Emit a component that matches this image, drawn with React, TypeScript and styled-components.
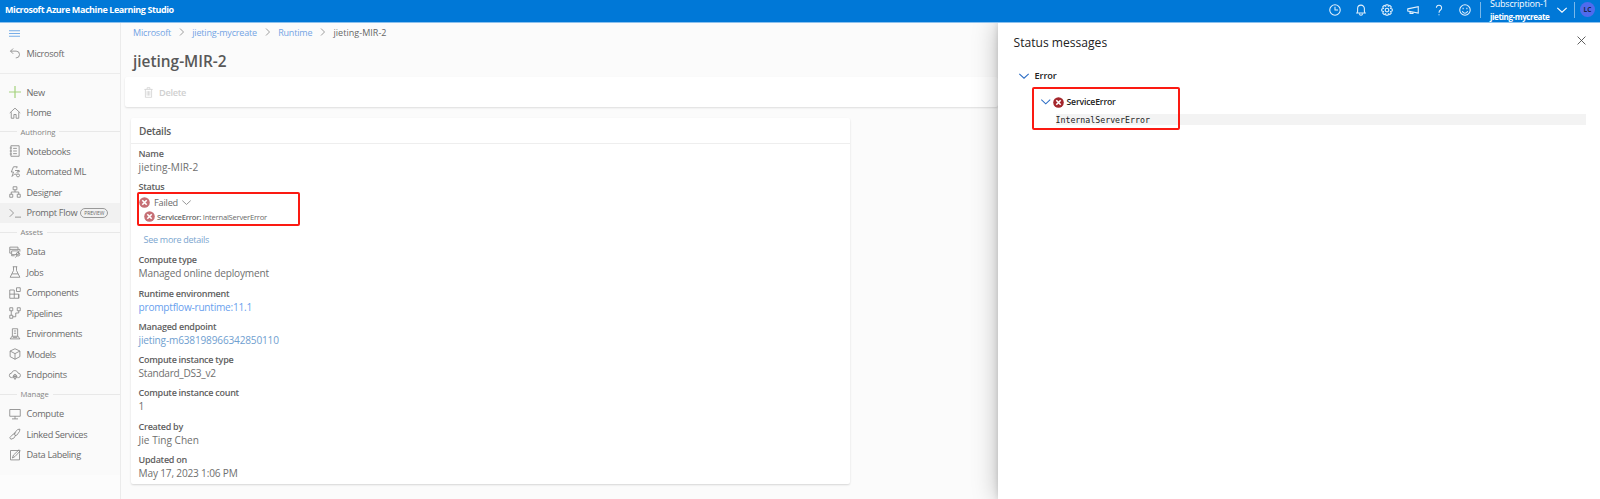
import React from "react";
import styled, { createGlobalStyle } from "styled-components";

const Global = createGlobalStyle`
  * { box-sizing: border-box; }
  html, body { margin: 0; padding: 0; overflow: hidden; }
  body { background: #fafafa; font-family: "Open Sans", "Noto Sans", sans-serif; color: #6a6a6a; }
`;

const Page = styled.div`
  width: 1600px;
  height: 499px;
  display: flex;
  flex-direction: column;
  overflow: hidden;
`;

const Header = styled.header`
  height: 23px;
  flex: none;
  background: #0078d7;
  border-bottom: 1px solid #8cc1ee;
  display: flex;
  align-items: center;
  color: #fff;
`;

const Brand = styled.div`
  margin: -3px auto 0 5px;
  font-size: 9px;
  font-weight: 700;
  line-height: 14px;
  letter-spacing: -0.42px;
  white-space: nowrap;
`;

const HeaderIcons = styled.div`
  display: flex;
  align-items: center;
  gap: 14px;
  margin: -3px 9px 0 0;
`;

const Divider = styled.span`
  width: 1px;
  height: 16px;
  margin-top: -3px;
  background: #7ab8ea;
`;

const Subscription = styled.div`
  width: 67px;
  margin: -1px 0 0 9px;
  font-size: 9px;
  line-height: 12px;
  letter-spacing: -0.2px;
  white-space: nowrap;
  strong { display: block; font-size: 8px; line-height: 13px; letter-spacing: -0.4px; }
`;

const HeaderChevron = styled.span`
  display: flex;
  margin: -3px 7px 0 0;
`;

const Avatar = styled.span`
  width: 15px;
  height: 15px;
  border-radius: 50%;
  margin: -3px 5px 0 5px;
  background: #4f6bed;
  color: #17264f;
  font-size: 6.5px;
  font-weight: 700;
  line-height: 15px;
  text-align: center;
`;

const Body = styled.div`
  flex: 1;
  min-height: 0;
  display: flex;
`;

const Sidebar = styled.nav`
  width: 121px;
  flex: none;
  border-right: 1px solid #ebebeb;
  background: linear-gradient(#fafafa 452px, #fcfcfc 452px);
`;

const MenuToggle = styled.div`
  height: 20px;
  display: flex;
  align-items: center;
  padding-left: 9px;
`;

const NavItem = styled.div<{ $active?: boolean }>`
  height: 20.5px;
  display: flex;
  align-items: center;
  gap: 5.5px;
  padding-left: 9px;
  font-size: 9.2px;
  letter-spacing: -0.32px;
  white-space: nowrap;
  background: ${(p) => (p.$active ? "#f1f1f1" : "transparent")};
`;

const BackArea = styled.div`
  height: 31px;
  border-bottom: 1px solid #ececec;
  margin-bottom: 7.8px;
`;

const NavSection = styled.div`
  height: 18.4px;
  display: flex;
  align-items: center;
  gap: 4px;
  font-size: 7.7px;
  letter-spacing: -0.08px;
  color: #858585;
  &::before { content: ""; width: 16.5px; height: 1px; background: #e8e8e8; }
  &::after { content: ""; flex: 1; height: 1px; background: #e8e8e8; }
`;

const PreviewTag = styled.span`
  height: 10px;
  margin-left: -2.5px;
  padding: 0 3px;
  border: 1px solid #999;
  border-radius: 6px;
  font-size: 5px;
  line-height: 8px;
  letter-spacing: -0.1px;
`;

const Main = styled.main`
  flex: 1;
  min-width: 0;
  padding-left: 4px;
  background: #fbfbfb;
`;

const Breadcrumb = styled.div`
  height: 18px;
  display: flex;
  align-items: center;
  gap: 6.6px;
  padding-left: 8px;
  font-size: 9px;
  letter-spacing: -0.18px;
  color: #74a4e4;
  white-space: nowrap;
`;

const Current = styled.span`
  color: #666;
  letter-spacing: 0.03px;
`;

const Title = styled.h1`
  margin: 10px 0 4px 8px;
  font-size: 15.4px;
  font-weight: 600;
  line-height: 22px;
  color: #585858;
`;

const Toolbar = styled.div`
  height: 30px;
  display: flex;
  align-items: center;
  gap: 5px;
  padding-left: 18px;
  background: #fff;
  border-radius: 2px;
  box-shadow: 0 1px 2px #0000001f;
  font-size: 9.2px;
  font-weight: 600;
  letter-spacing: -0.3px;
  color: #d0d0d0;
`;

const Card = styled.section`
  width: 719px;
  height: 366px;
  margin: 11px 0 0 6px;
  background: #fff;
  border-radius: 2px;
  box-shadow: 0 1px 2px #00000026;
`;

const CardTitle = styled.h2`
  height: 26px;
  margin: 0;
  padding-left: 8px;
  border-bottom: 1px solid #eee;
  font-size: 10.1px;
  font-weight: 600;
  line-height: 26px;
  letter-spacing: -0.25px;
  color: #5c5c5c;
`;

const Field = styled.div`
  height: 33.3px;
  padding: 3px 0 0 7.6px;
  white-space: nowrap;
`;

const Label = styled.div`
  font-size: 9px;
  font-weight: 600;
  line-height: 13px;
  letter-spacing: -0.27px;
  color: #606060;
`;

const Value = styled.div<{ $color?: string; $spacing?: number }>`
  font-size: 10.1px;
  line-height: 14px;
  letter-spacing: ${(p) => p.$spacing ?? -0.18}px;
  color: ${(p) => p.$color ?? "#6f6f6f"};
`;

const StatusField = styled(Field)`
  height: 73px;
`;

const StatusBox = styled.div`
  width: 163px;
  height: 34px;
  margin: -1px 0 0 -2px;
  border: 2px solid #fb1a12;
  border-radius: 2px;
`;

const StatusRow = styled.div<{ $indent?: boolean }>`
  height: ${(p) => (p.$indent ? 13 : 16)}px;
  display: flex;
  align-items: center;
  gap: ${(p) => (p.$indent ? 2.5 : 4.5)}px;
  padding-left: ${(p) => (p.$indent ? 5 : 0)}px;
  font-size: ${(p) => (p.$indent ? "7.6px" : "9.2px")};
  letter-spacing: -0.23px;
  b { font-weight: 600; }
`;

const MoreLink = styled.div`
  margin: 7px 0 0 5px;
  font-size: 9px;
  line-height: 13px;
  letter-spacing: -0.28px;
  color: #7ba6cf;
`;

const Panel = styled.aside`
  width: 602px;
  flex: none;
  z-index: 1;
  background: #fff;
  box-shadow: 0 0 24px #00000045, 0 0 6px #00000022;
  clip-path: inset(0 0 0 -60px);
  color: #222;
`;

const PanelHeader = styled.div`
  height: 42px;
  display: flex;
  align-items: center;
  justify-content: space-between;
  padding: 0 14px 4px 15.5px;
  font-size: 12.1px;
`;

const PanelClose = styled.span`
  display: flex;
  margin-top: -3px;
`;

const TreeRow = styled.div`
  display: flex;
  align-items: center;
  gap: 5.5px;
  height: 22px;
  padding: 0 0 1px 21px;
  font-size: 9.2px;
  font-weight: 600;
  letter-spacing: -0.1px;
`;

const ErrorGroup = styled.div`
  display: flex;
  margin: -0.5px 0 0 34px;
`;

const ErrorBox = styled.div`
  width: 147.5px;
  height: 43px;
  flex: none;
  border: 2px solid #fb1a12;
  border-radius: 2px;
`;

const ErrorRow = styled.div`
  height: 25px;
  display: flex;
  align-items: center;
  gap: 2.5px;
  padding: 2px 0 0 7px;
  font-size: 8.7px;
  font-weight: 600;
  letter-spacing: -0.18px;
`;

const Message = styled.div`
  height: 11px;
  margin-left: 21.5px;
  background: #f3f3f3;
  font-family: "DejaVu Sans Mono", monospace;
  font-size: 8.25px;
  line-height: 12px;
`;

const MessageTail = styled.div`
  width: 406px;
  height: 11px;
  margin-top: 27px;
  background: #f3f3f3;
`;

type IconProps = { d: string; size?: number; color?: string; w?: number };
const Icon = ({ d, size = 12, color = "#858585", w = 1.1 }: IconProps) => (
  <svg width={size} height={size} viewBox="0 0 16 16" fill="none" stroke={color} strokeWidth={w} overflow="visible" style={{ flex: "none" }}>
    <path d={d} />
  </svg>
);

const ErrorIcon = ({ color }: { color: string }) => (
  <svg width="11" height="11" viewBox="0 0 11 11" style={{ flex: "none" }}>
    <circle cx="5.5" cy="5.5" r="5.3" fill={color} />
    <path d="M3.3 3.3l4.4 4.4M7.7 3.3L3.3 7.7" stroke="#fff" strokeWidth="1.6" />
  </svg>
);

const circle = (x: number, y: number, r: number) => `M${x - r} ${y}a${r} ${r} 0 1 0 ${2 * r} 0a${r} ${r} 0 1 0 ${-2 * r} 0`;
const chevronDown = "M0.500 4.500l7.500 7 7.500-7";
const chevronRight = "M4 1l7 7-7 7";

const icons = {
  menu: "M0 4h16M0 8h16M0 12h16",
  back: "M5.500 2L2 5.500 5.500 9M2 5.500h7.500a4.500 4.500 0 0 1 0 9H9",
  plus: "M8 0v16M0 8h16",
  home: "M1 8l7-6.500L15 8M3 7v8h3.500v-5h3v5H13V7",
  notebook: "M2.500 1h11v14h-11zM5.500 4.500h5M5.500 8h5M5.500 11.500h5M1 4h3M1 8h3M1 12h3",
  automl: "M10 3l1-2H6L3 8h3l-2 6 3-3M8 6h5l-3 3.500M7 11h3" + circle(12, 12.5, 2) + circle(13, 7, 1),
  designer: "M5.500 1h5v4h-5zM8 5v3M3 11V8h10v3M1 11h4v4H1zM11 11h4v4h-4z",
  prompt: "M1 3l5 5-5 5M8 13.500h8",
  data: "M1 1.500h11v3H1zM1 4.500v5h2M12 4.500h2.500v3M3.500 6.500h9v5h-9zM3.500 11.500v1.500h4" + circle(12, 11, 2.4) + "M10.500 13L8.500 15.500",
  flask: "M5 1h6M6 1v5L1.500 15h13L10 6V1M4 10.500h8",
  components: "M1 4h6v11H1zM1 9.500h12V15H7M13 9.500V15M10 1h5v5h-5z",
  pipelines: "M1 1h4v4H1zM11 1h4v4h-4zM3 5v6M1 11h4v4H1zM13 5v3H9v5M5 13h4",
  environments: "M4.500 1h7v10h-7zM1.500 14.500L4.500 10.500M11.500 10.500l3 4M1.500 14.500h13M6.500 4h3M6.500 7h3M5 12.500h6",
  cube: "M8 1l6.500 3v7.500L8 15l-6.500-3.500V4zM1.500 4L8 7.500 14.500 4M8 7.500V15",
  cloud: "M5 11.500H3.500a3 3 0 0 1 0-6C4.500 1 11 1 12 5.500a3 3 0 0 1 .5 6H11M8 6.500v8" + circle(8, 10, 2.5) + "M5.500 10h5",
  monitor: "M1 2h14v9H1zM8 11v3.500M4 14.500h8",
  link: "M7 7l4.500-5 3-.5-.5 3-3.500 5-2.500.5zM9.500 6L4 9.500l-3 3.500 1.500 2 4-1.500 2.500-4",
  label: "M14 6v8.500H2V2h12v4M4.500 12l1.500-4L13.500 1 15 2.500 8 10z",
  trash: "M2 3.500h12M6 3V1h4v2M3.500 3.500V15h9V3.500M6 6v6.500M8 6v6.500M10 6v6.500",
  clock: circle(8, 8, 7) + "M8 3.500V8h4",
  bell: "M2.500 12h11l-1-2V6a4.500 4.500 0 0 0-9 0v4zM6 13a2 2 0 0 0 4 0",
  gear: "M6.700 1h2.600l.5 2 2-1 1.900 1.900-1 2 2.300.8v2.600l-2.300.8 1 2-1.900 1.900-2-1-.5 2H6.700l-.5-2-2 1-1.900-1.900 1-2L1 9.300V6.700l2.300-.8-1-2L4.200 2l2 1z" + circle(8, 8, 2.4),
  megaphone: "M1 6.500L15 3.500v8.500L1 9.500zM4 10v2.500h4V11",
  help: "M4.500 5a3.500 3.500 0 1 1 5.500 3C8.500 9 8 9.500 8 11.500M8 13.500v1.500",
  smile: circle(8, 8, 7) + "M4.500 9.500a3.600 3.600 0 0 0 7 0M5.500 5v2M10.500 5v2",
  close: "M1 1l14 14M15 1l-14 14",
};

const groups: { section?: string; items: [string, string][] }[] = [
  { items: [["New", icons.plus], ["Home", icons.home]] },
  {
    section: "Authoring",
    items: [
      ["Notebooks", icons.notebook],
      ["Automated ML", icons.automl],
      ["Designer", icons.designer],
      ["Prompt Flow", icons.prompt],
    ],
  },
  {
    section: "Assets",
    items: [
      ["Data", icons.data],
      ["Jobs", icons.flask],
      ["Components", icons.components],
      ["Pipelines", icons.pipelines],
      ["Environments", icons.environments],
      ["Models", icons.cube],
      ["Endpoints", icons.cloud],
    ],
  },
  {
    section: "Manage",
    items: [
      ["Compute", icons.monitor],
      ["Linked Services", icons.link],
      ["Data Labeling", icons.label],
    ],
  },
];

type Detail = { label: string; value: string; color?: string; spacing?: number };
const details: Detail[] = [
  { label: "Compute type", value: "Managed online deployment" },
  { label: "Runtime environment", value: "promptflow-runtime:11.1", color: "#6a9fee", spacing: -0.24 },
  { label: "Managed endpoint", value: "jieting-m638198966342850110", color: "#6fa0d0" },
  { label: "Compute instance type", value: "Standard_DS3_v2", spacing: -0.28 },
  { label: "Compute instance count", value: "1" },
  { label: "Created by", value: "Jie Ting Chen", spacing: 0 },
  { label: "Updated on", value: "May 17, 2023 1:06 PM" },
];

const headerIcons = [icons.clock, icons.bell, icons.gear, icons.megaphone, icons.help, icons.smile];

export default function App() {
  return (
    <Page>
      <Global />
      <Header>
        <Brand>Microsoft Azure Machine Learning Studio</Brand>
        <HeaderIcons>
          {headerIcons.map((d, i) => (
            <Icon key={i} d={d} color="#e4f1fc" w={1.4} />
          ))}
        </HeaderIcons>
        <Divider />
        <Subscription>
          Subscription-1
          <strong>jieting-mycreate</strong>
        </Subscription>
        <HeaderChevron>
          <Icon d={chevronDown} size={10} color="#fff" w={1.8} />
        </HeaderChevron>
        <Divider />
        <Avatar>LC</Avatar>
      </Header>
      <Body>
        <Sidebar>
          <MenuToggle>
            <Icon d={icons.menu} size={11} color="#78aee8" w={1.5} />
          </MenuToggle>
          <BackArea>
            <NavItem>
              <Icon d={icons.back} />
              Microsoft
            </NavItem>
          </BackArea>
          {groups.map((group, i) => (
            <React.Fragment key={i}>
              {group.section && <NavSection>{group.section}</NavSection>}
              {group.items.map(([name, d]) => (
                <NavItem key={name} $active={name === "Prompt Flow"}>
                  <Icon d={d} color={name === "New" ? "#a4d27c" : undefined} w={name === "New" ? 1.6 : 1.1} />
                  {name}
                  {name === "Prompt Flow" && <PreviewTag>PREVIEW</PreviewTag>}
                </NavItem>
              ))}
            </React.Fragment>
          ))}
        </Sidebar>
        <Main>
          <Breadcrumb>
            Microsoft <Icon d={chevronRight} size={8} w={1.6} />
            jieting-mycreate <Icon d={chevronRight} size={8} w={1.6} />
            Runtime <Icon d={chevronRight} size={8} w={1.6} />
            <Current>jieting-MIR-2</Current>
          </Breadcrumb>
          <Title>jieting-MIR-2</Title>
          <Toolbar>
            <Icon d={icons.trash} size={11} color="#cfcfcf" />
            Delete
          </Toolbar>
          <Card>
            <CardTitle>Details</CardTitle>
            <Field>
              <Label>Name</Label>
              <Value $spacing={0.05}>jieting-MIR-2</Value>
            </Field>
            <StatusField>
              <Label>Status</Label>
              <StatusBox>
                <StatusRow>
                  <ErrorIcon color="#c66f75" />
                  Failed
                  <Icon d={chevronDown} size={9} w={1.5} />
                </StatusRow>
                <StatusRow $indent>
                  <ErrorIcon color="#c66f75" />
                  <span>
                    <b>ServiceError:</b> InternalServerError
                  </span>
                </StatusRow>
              </StatusBox>
              <MoreLink>See more details</MoreLink>
            </StatusField>
            {details.map(({ label, value, color, spacing }) => (
              <Field key={label}>
                <Label>{label}</Label>
                <Value $color={color} $spacing={spacing}>{value}</Value>
              </Field>
            ))}
          </Card>
        </Main>
        <Panel>
          <PanelHeader>
            Status messages
            <PanelClose>
              <Icon d={icons.close} size={9} color="#444" w={1.5} />
            </PanelClose>
          </PanelHeader>
          <TreeRow>
            <Icon d={chevronDown} size={10} color="#2b6cc4" w={1.7} />
            Error
          </TreeRow>
          <ErrorGroup>
            <ErrorBox>
              <ErrorRow>
                <Icon d={chevronDown} size={9.5} color="#2b6cc4" w={1.7} />
                <ErrorIcon color="#a4262c" />
                ServiceError
              </ErrorRow>
              <Message>InternalServerError</Message>
            </ErrorBox>
            <MessageTail />
          </ErrorGroup>
        </Panel>
      </Body>
    </Page>
  );
}
